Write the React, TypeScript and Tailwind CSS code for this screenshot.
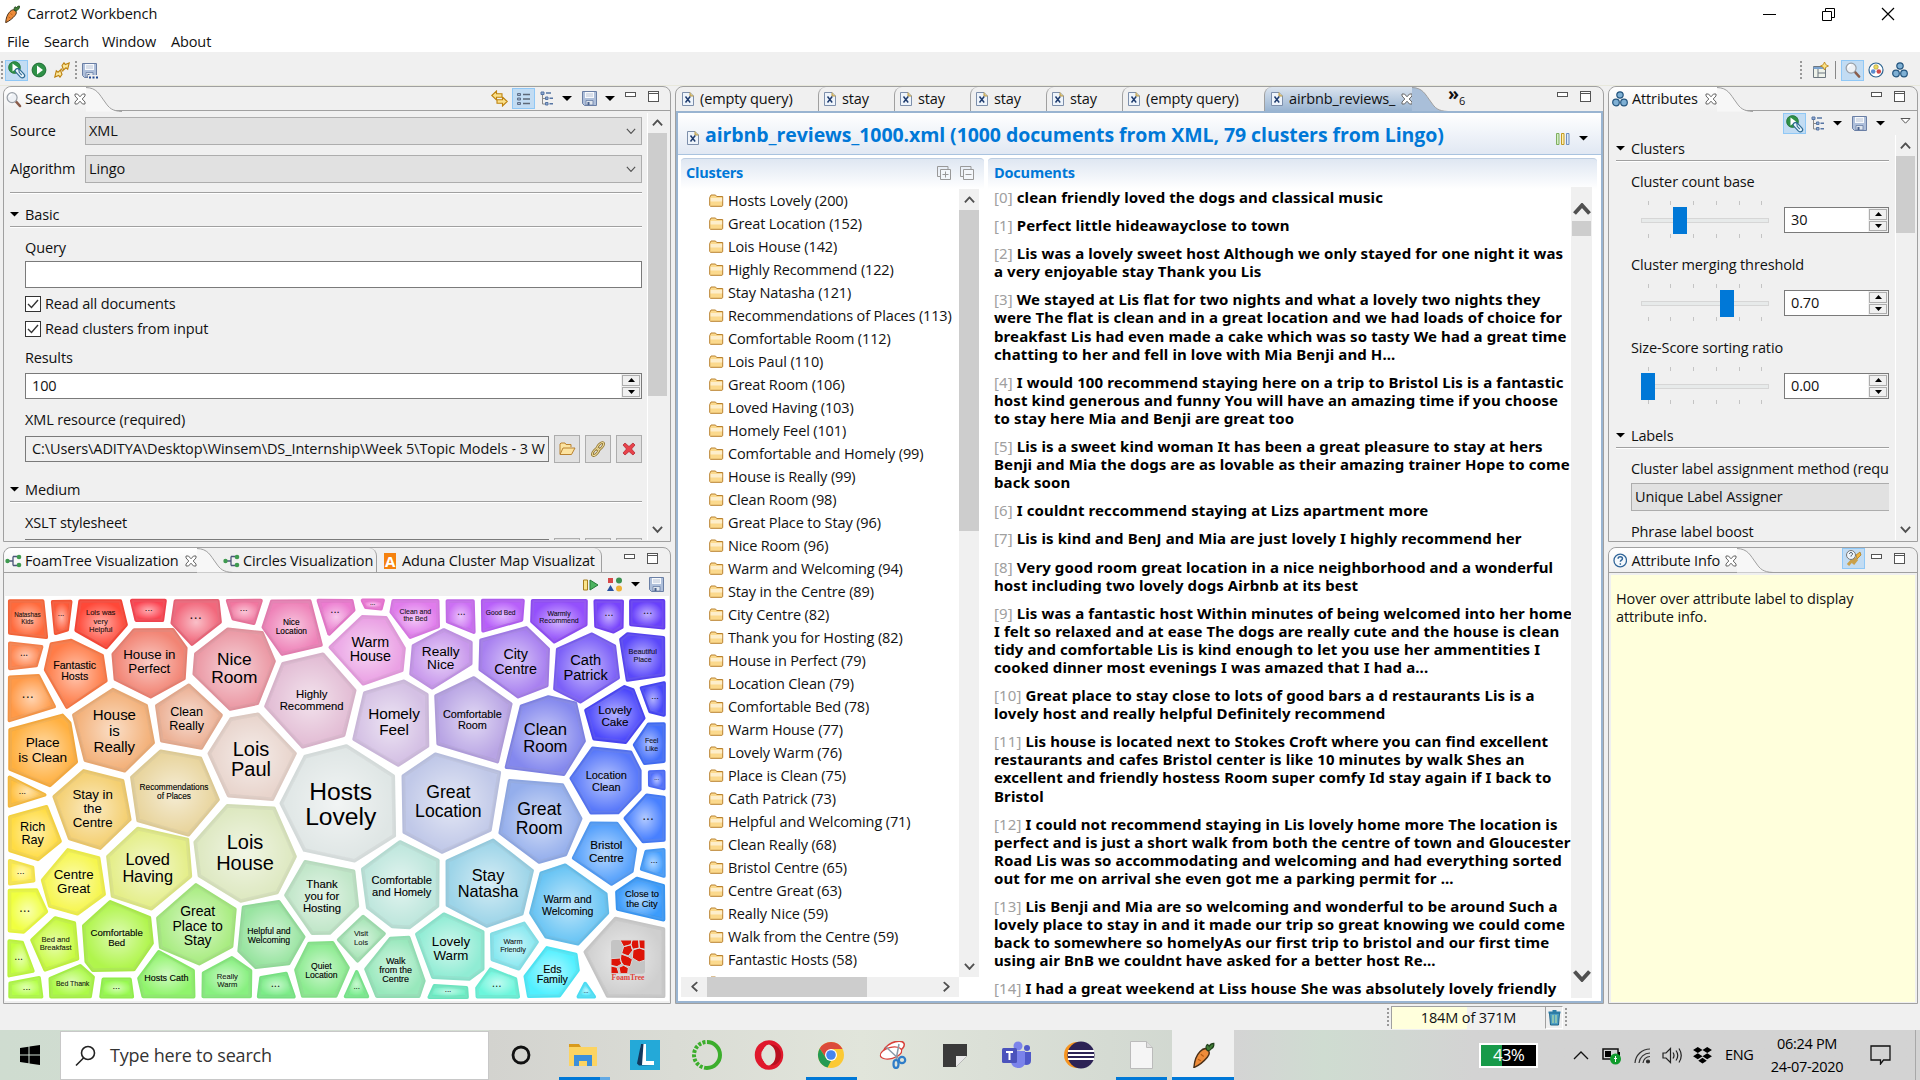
import React from "react";

type Kids = { children?: React.ReactNode };

/* ---------- small icons ---------- */
const Tri = ({ s = 10 }: { s?: number }) => (
  <svg width={s} height={s / 2} viewBox="0 0 10 5" className="shrink-0"><path d="M0 0h10L5 5z" fill="#000" /></svg>
);
const CloseX = () => (
  <svg width="12" height="12" viewBox="0 0 12 12" className="shrink-0">
    <path d="M1 1h2.500L6 3.800 8.500 1H11v2L8.200 6 11 9v2H8.500L6 8.200 3.500 11H1V9l2.800-3L1 3z" fill="#fff" stroke="#666" strokeWidth="1" />
  </svg>
);
const MinMax = ({ gap = "gap-[12px]" }: { gap?: string }) => (
  <div className={"flex items-start " + gap}>
    <div className="mt-[1px] h-[5px] w-[11px] border border-[#555] bg-white" />
    <div className="h-[11px] w-[11px] border border-[#555] bg-white"><div className="mt-px h-px bg-[#555]" /></div>
  </div>
);
const Play = ({ s = 16 }: { s?: number }) => (
  <svg width={s} height={s} viewBox="0 0 16 16"><circle cx="8" cy="8" r="6.900" fill="#2f9147" stroke="#1e6e33" /><path d="M6 3.500v9L12 8z" fill="#fff" /></svg>
);
const PlayClip = () => (
  <svg width="18" height="18" viewBox="0 0 18 18">
    <circle cx="6.500" cy="6.500" r="5.900" fill="#2f9147" stroke="#1e6e33" strokeWidth=".8" /><path d="M4.500 2.500v8L10 6.500z" fill="#fff" />
    <path d="M7.500 8.500c1.500-1.800 3.500-.8 5 .8l3.500 3.800c2 2.500-1 5-3.500 3l-4-4.200C7 10.500 6.800 9.500 7.500 8.500z" fill="#eaf4fb" stroke="#2f6b93" strokeWidth="1.200" />
    <path d="M10.800 7.500l.4 3.800 2.600 2.800" fill="none" stroke="#2f6b93" strokeWidth="1.100" />
  </svg>
);
const Swap = () => (
  <svg width="16" height="16" viewBox="0 0 16 16" fill="#fbe79b" stroke="#bd8210" strokeWidth="1.100">
    <path d="M8 3.500L10 .8l1.300 1.700L15.200 1l-1.500 6.200L12 5.800 9.500 8zM8 12.500l-2 2.700-1.300-1.700L.8 15l1.500-6.200L4 10.200 6.500 8z" />
    <path d="M7 6.500l2 3" />
  </svg>
);
const LinkArrows = () => (
  <svg width="17" height="17" viewBox="0 0 17 17" fill="#fbe08a" stroke="#bd8210" strokeWidth="1.100">
    <path d="M.8 5.500L5.500 1v2.800H11v3.400H5.500V10zM16.200 11.500L11.500 7v2.800H6v3.400h5.500V16z" />
  </svg>
);
const Save = ({ dots = false }: { dots?: boolean }) => (
  <svg width="17" height="17" viewBox="0 0 17 17">
    <path d="M1.500 1.500h14v14h-12l-2-2z" fill="#aebfda" stroke="#6a7fa5" />
    <path d="M4 2h9v6H4z" fill="#f7f9fc" /><path d="M5 4h7M5 6h7" stroke="#b9c4d6" />
    <path d="M5 10.500h7V15H5z" fill="#dfe6ee" stroke="#6a7fa5" strokeWidth=".8" /><path d="M6.500 12h2v3h-2z" fill="#49618c" />
    {dots && <path d="M7 13h10v4H7z" fill="#f0f0f0" />}
    {dots && <path d="M8 15.500h2M11.500 15.500h2M15 15.500h2" stroke="#234a92" strokeWidth="2" />}
  </svg>
);
const ListIcon = () => (
  <svg width="14" height="14" viewBox="0 0 14 14" stroke="#5f7089"><path d="M.5 1.500h3v2h-3zM.5 6h3v2h-3zM.5 10.500h3v2h-3z" fill="#9fb2cf" /><path d="M6 2.500h7M6 7h7M6 11.500h7" stroke="#5d6877" strokeWidth="1.300" /></svg>
);
const TreeIcon = () => (
  <svg width="14" height="15" viewBox="0 0 14 15" fill="none" stroke="#5675a3"><path d="M2.500 3v10h3M2.500 7.500h3" stroke="#888" /><path d="M1 1h3v2.500H1zM5.500 6h2.500v2.500H5.500zM5.500 11.500h2.500V14H5.500z" fill="#8fa9d1" /><path d="M6 2h5M9.500 7.300H13M9.500 12.700H13" strokeWidth="1.400" /></svg>
);
const Magnifier = ({ s = 17 }: { s?: number }) => (
  <svg width={s} height={s} viewBox="0 0 17 17"><path d="M10.500 10.500l4.500 5" stroke="#8a5d4b" strokeWidth="2.600" strokeLinecap="round" /><circle cx="6.500" cy="6.500" r="5.300" fill="#eef1f5" stroke="#9aa0a8" strokeWidth="1.300" /><path d="M3.500 6a3.200 3.200 0 013-3" stroke="#fff" strokeWidth="1.500" fill="none" /></svg>
);
const Balls = () => (
  <svg width="16" height="16" viewBox="0 0 16 16" fill="#7fb0d4" stroke="#24557e" strokeWidth="1.200"><circle cx="8" cy="4" r="3.200" /><circle cx="4" cy="11.500" r="3.300" /><circle cx="12" cy="11.500" r="3.300" /></svg>
);
const RingIcon = () => (
  <svg width="16" height="16" viewBox="0 0 16 16"><circle cx="8" cy="8" r="7" fill="#fff" stroke="#2c6390" strokeWidth="1.200" /><circle cx="8" cy="5" r="2.300" fill="#ecd95e" stroke="#a8953a" strokeWidth=".6" /><circle cx="5.200" cy="9.500" r="2.300" fill="#5c8fd0" /><circle cx="10.800" cy="9.500" r="2.300" fill="#d04a4a" /></svg>
);
const Perspective = () => (
  <svg width="17" height="17" viewBox="0 0 17 17"><path d="M1.500 4.500h12v11h-12z" fill="#eef2ea" stroke="#6d7780" /><path d="M1.500 5h12v2h-12z" fill="#7ba3d0" /><path d="M6 7v8M6 11h7.500" stroke="#6d7780" /><path d="M12.500 0l1.300 2.700L16.500 4l-2.700 1.300L12.500 8l-1.300-2.700L8.500 4l2.700-1.300z" fill="#fbe384" stroke="#bd8210" strokeWidth=".8" /></svg>
);
const Carrot = ({ s = 18 }: { s?: number }) => (
  <svg width={s} height={s} viewBox="0 0 18 18"><path d="M12.500 5.500c1.300 1.500 1 3.200-.5 5-2.500 3-5.500 5.500-9.300 7.200C3 13.500 4 9.500 7 6.500c1.700-1.700 4-2.500 5.500-1z" fill="#ee8c3a" stroke="#4a3018" strokeWidth="1" /><path d="M7.500 8.500l2 1.500M5.500 12l2 1" stroke="#b85d14" strokeWidth=".8" /><path d="M12 6c-1.200-1.500-1.200-3 0-4.300.7.300 1 .6 1.300 1.300C14 1.500 15 1 16.500 1c.2 1.700-.3 2.800-1.500 3.500-.8 1.200-1.800 1.700-3 1.500z" fill="#3f7c35" stroke="#1f3f1a" strokeWidth=".8" /></svg>
);
const XFile = () => (
  <svg width="12" height="14" viewBox="0 0 12 14" className="shrink-0"><path d="M.5.5h7.500l3.500 3.500v9.500H.5z" fill="#eef4fb" stroke="#7d8fab" /><path d="M8 .5v3.500h3.500" fill="#e0c98a" stroke="#b89a4a" /><path d="M3.500 4.500l4.700 6M8.200 4.500l-4.700 6" stroke="#1f3c6e" strokeWidth="1.500" /></svg>
);
const Folder = () => (
  <svg width="15" height="13" viewBox="0 0 15 13" className="shrink-0">
    <path d="M.7 3.500L2 1h4.500l1.200 1.500h6v9.200L13 12.300H1.500L.7 11.500z" fill="#fbd98d" stroke="#b98230" /><path d="M1.500 4h11.700v3.500H1.500z" fill="#fff" opacity=".55" />
  </svg>
);
const Share = () => (
  <svg width="17" height="14" viewBox="0 0 17 14" className="shrink-0"><path d="M4 7h4M8 2.500v9M8 2.500h4M8 11.500h4" fill="none" stroke="#4a5578" strokeWidth="1.300" /><circle cx="2.500" cy="7" r="2.200" fill="#3f9a4f" /><circle cx="14" cy="3" r="2.300" fill="#3f9a4f" /><circle cx="14" cy="11" r="2.300" fill="#3f9a4f" /></svg>
);
const Chevron = ({ up = false, s = 9, w = 1.8 }: { up?: boolean; s?: number; w?: number }) => (
  <svg width={s} height={s * 0.67} viewBox="0 0 12 8" className={up ? "rotate-180" : ""}><path d="M1 1l5 5.500L11 1" fill="none" stroke="#505050" strokeWidth={w} /></svg>
);
const Grip = () => <div className="h-[18px] w-[2px] border-l-2 border-dotted border-[#999]" />;
const Hi = ({ children }: Kids) => (
  <div className="flex h-[21px] w-[23px] shrink-0 items-center justify-center border border-[#90c8f6] bg-[#c2dcf3]">{children}</div>
);

/* ---------- tabs ---------- */
const TabCurve = ({ fill = "#fff" }: { fill?: string }) => (
  <svg width="36" height="25" viewBox="0 0 36 25" className="shrink-0">
    <path d="M0 0C11 1 13 7 19 15c4 6 7 9 16 9.500H0z" fill={fill} /><path d="M0 .5C11 1 13 7 19 15c4 6 7 9 17 9.500" fill="none" stroke="#a0a0a0" />
  </svg>
);

/* ---------- form pieces ---------- */
const Combo = ({ text, cls }: { text: string; cls: string }) => (
  <div className={"flex h-[28px] items-center justify-between border border-[#adadad] bg-[#e1e1e1] pr-[5px] pl-[3px] " + cls}>
    <span>{text}</span><Chevron s={10} w={1.300} />
  </div>
);
const Spinner = ({ value, cls }: { value: string; cls: string }) => (
  <div className={"flex h-[26px] items-center border border-[#7a7a7a] bg-white pl-[6px] " + cls}>
    <span className="flex-1">{value}</span>
    <div className="flex h-full w-[20px] flex-col gap-px bg-[#f0f0f0] p-px">
      <div className="flex flex-1 items-center justify-center border border-[#adadad] bg-[#f0f0f0]"><svg width="7" height="4"><path d="M0 4h7L3.500 0z" /></svg></div>
      <div className="flex flex-1 items-center justify-center border border-[#adadad] bg-[#f0f0f0]"><svg width="7" height="4"><path d="M0 0h7L3.500 4z" /></svg></div>
    </div>
  </div>
);
const Check = ({ text }: { text: string }) => (
  <div className="flex h-[25px] items-center gap-[4px]">
    <div className="h-[16px] w-[16px] border border-[#333] bg-white"><svg width="14" height="14" viewBox="0 0 14 14"><path d="M2 7l3.500 3.500L12 3" fill="none" stroke="#333" strokeWidth="1.400" /></svg></div>
    <span>{text}</span>
  </div>
);
const SectionHead = ({ text, gap = "gap-[6px]" }: { text: string; gap?: string }) => (
  <div className={"flex h-[24px] items-center border-b border-[#a0a0a0] shadow-[0_1px_0_#fff] " + gap}><Tri s={9} /><span>{text}</span></div>
);
const Btn = ({ children }: Kids) => (
  <div className="flex h-[28px] w-[26px] items-center justify-center border border-[#adadad] bg-[#e1e1e1]">{children}</div>
);
const ResourceRow = ({ text }: { text: string }) => (
  <div className="flex h-[28px] w-[617px] items-center justify-between">
    <div className="flex h-[26px] w-[524px] items-center overflow-hidden border border-[#7a7a7a] bg-[#f0f0f0] px-[2px]">
      <div className="overflow-hidden pl-[4px] tracking-[-0.080px] whitespace-nowrap">{text}</div>
    </div>
    <Btn><svg width="17" height="14" viewBox="0 0 17 14" fill="#fce3a0" stroke="#b98230"><path d="M1 12V2l1-1h4l1 1.500h5V5" /><path d="M1 12.500L4 6h12l-3.500 6.500z" /></svg></Btn>
    <Btn><svg width="16" height="16" viewBox="0 0 16 16" fill="none"><g stroke="#8f7430" strokeWidth="2.600"><ellipse cx="10.300" cy="5.200" rx="2" ry="4.500" transform="rotate(40 10.300 5.200)" /><ellipse cx="5.700" cy="10.800" rx="2" ry="4.500" transform="rotate(40 5.700 10.800)" /></g><g stroke="#efdc9c" strokeWidth="1"><ellipse cx="10.300" cy="5.200" rx="2" ry="4.500" transform="rotate(40 10.300 5.200)" /><ellipse cx="5.700" cy="10.800" rx="2" ry="4.500" transform="rotate(40 5.700 10.800)" /></g></svg></Btn>
    <Btn><svg width="14" height="14" viewBox="0 0 14 14"><path d="M1 3l2-2 4 3.500L11 1l2 2-3.500 4L13 11l-2 2-4-3.500L3 13l-2-2 3.500-4z" fill="#e8424a" stroke="#b01c28" strokeWidth=".7" /></svg></Btn>
  </div>
);

/* ---------- search panel ---------- */
const SearchPanel = () => (
  <section className="h-[456px] w-[668px] rounded-t-[8px] border border-[#a0a0a0] bg-[#f0f0f0]">
    <div className="flex h-[24px] items-start border-b border-[#a0a0a0]">
      <div className="flex h-[24px] w-[82px] items-center gap-[3px] rounded-tl-[8px] bg-linear-to-b from-white to-[#f0f0f0] pl-[2px]"><Magnifier /><span className="w-[49px]">Search</span><CloseX /></div>
      <TabCurve fill="#f7f7f7" />
      <div className="mt-px ml-auto flex h-[21px] items-center pr-[11px]">
        <LinkArrows /><div className="ml-[4px]"><Hi><ListIcon /></Hi></div>
        <div className="ml-[5px]"><TreeIcon /></div><div className="ml-[8px]"><Tri /></div>
        <div className="ml-[9px]"><Save /></div><div className="ml-[7px]"><Tri /></div>
        <div className="mb-[4px] ml-[10px]"><MinMax /></div>
      </div>
    </div>
    <div className="flex h-[429px] overflow-hidden pt-[2px]">
      <div className="w-[643px] pt-[4px] pl-[6px]">
        <div className="flex h-[28px] items-center"><span className="w-[75px]">Source</span><Combo text="XML" cls="w-[557px]" /></div>
        <div className="mt-[10px] flex h-[28px] items-center"><span className="w-[75px]">Algorithm</span><Combo text="Lingo" cls="w-[557px]" /></div>
        <div className="mt-[9px] h-px w-[632px] bg-[#a0a0a0] shadow-[0_1px_0_#fff]" />
        <div className="mt-[10px] w-[632px]"><SectionHead text="Basic" /></div>
        <div className="pl-[15px]">
          <div className="flex h-[34px] items-end pb-[4px]">Query</div>
          <div className="h-[27px] w-[617px] border border-[#7a7a7a] bg-white" />
          <div className="mt-[3px]"><Check text="Read all documents" /><Check text="Read clusters from input" /></div>
          <div className="flex h-[32px] items-end pb-[6px]">Results</div>
          <div className="h-[26px]"><Spinner value="100" cls="w-[617px]" /></div>
          <div className="flex h-[36px] items-end pb-[6px]">XML resource (required)</div>
          <ResourceRow text="C:\Users\ADITYA\Desktop\Winsem\DS_Internship\Week 5\Topic Models - 3 W" />
        </div>
        <div className="mt-[15px] w-[632px]"><SectionHead text="Medium" /></div>
        <div className="pl-[15px]">
          <div className="flex h-[36px] items-center pt-[6px]">XSLT stylesheet</div>
          <ResourceRow text="" />
        </div>
      </div>
      <div className="flex h-[427px] w-[20px] flex-col items-center border-l border-white bg-[#f0f0f0]">
        <div className="flex h-[20px] items-center"><Chevron up s={11} w={2} /></div>
        <div className="h-[263px] w-full bg-[#cdcdcd]" />
        <div className="mt-auto flex h-[20px] items-center"><Chevron s={11} w={2} /></div>
      </div>
    </div>
  </section>
);

/* ---------- foam tree (coordinates are thirds of a pixel, grouped in quadrants) ---------- */
type Cell = [string, string, string?, number?, number?, number?, number?];
const TL: Cell[] = [
  ["25,179 132,179 143,296 25,283", "#ff6a3c", "Natashas|Kids", 19, 82, 225, 20],
  ["155,180 215,180 204,275 165,285", "#ff5a38", "...", 24, 183, 219],
  ["236,179 365,179 384,255 320,328 223,273", "#ff4838", "Lois was|very|Helpful", 23, 302, 217, 26],
  ["390,179 500,179 492,244 404,244", "#fc4552", "...", 28, 446, 203],
  ["522,179 658,179 666,247 575,318 511,250", "#f2687c", "...", 46, 587, 222],
  ["678,179 788,179 765,254 695,240", "#f277a0", "...", 28, 731, 204],
  ["812,179 933,179 968,318 845,348 784,262", "#ee82b8", "Nice|Location", 25, 874, 246, 26],
  ["150,308 213,296 312,345 323,425 200,507 131,390", "#ff7c48", "Fantastic|Hosts", 32, 224, 376, 32],
  ["400,265 522,265 563,322 557,418 452,476 341,420 334,342", "#f28474", "House in|Perfect", 40, 448, 343, 43],
  ["683,262 790,274 828,363 775,495 690,513 577,403 582,340", "#eb98a4", "Nice|Room", 52, 703, 358, 54],
  ["25,306 130,318 113,380 25,389", "#ff8650", "...", 30, 72, 338],
  ["25,408 118,402 168,502 25,546", "#ff9a48", "...", 44, 83, 460],
  ["338,443 443,493 465,610 375,698 252,665 216,523", "#f3b078", "House|is|Really", 45, 343, 525, 47],
  ["567,430 669,525 607,629 481,606 465,495", "#ecb094", "Clean|Really", 38, 560, 515, 42],
  ["190,521 213,545 234,668 150,742 25,690 25,567", "#ffb040", "Place|is Clean", 41, 128, 607, 45],
  ["690,532 775,517 891,640 820,783 683,772 622,640", "#e8d4cc", "Lois|Paul", 60, 753, 626, 60],
  ["845,367 970,337 1070,450 1035,590 907,626 792,500", "#e2bcd4", "Highly|Recommend", 34, 935, 463, 35],
];
const TR: Cell[] = [
  ["-40,179 70,179 77,210 -5,287", "#ec7cd0", "...", 34, 15, 208],
  ["92,179 165,179 158,209 102,204", "#f078d8", "...", 20, 128, 187],
  ["185,179 328,179 330,262 240,297 178,215", "#e07cec", "Clean and|the Bed", 21, 256, 215, 21],
  ["348,179 433,179 435,281 348,248", "#cc70f4", "...", 30, 394, 214],
  ["453,179 584,179 580,242 455,276", "#b860fa", "Good Bed", 20, 512, 218],
  ["603,179 773,179 773,255 672,311 600,245", "#9450fc", "Warmly|Recommend", 21, 687, 220, 22],
  ["792,179 880,179 880,265 852,281 793,262", "#7844fc", "...", 32, 837, 216],
  ["898,179 1005,179 1005,267 898,257", "#6840fc", "...", 34, 953, 211],
  ["95,225 170,228 228,325 220,395 98,437 -5,322", "#eaa0e4", "Warm|House", 43, 121, 306, 42],
  ["342,264 428,305 428,372 305,449 238,405 245,315", "#c898ec", "Really|Nice", 41, 332, 333, 41],
  ["590,258 660,325 655,440 565,476 445,390 448,298", "#a880f0", "City|Centre", 43, 557, 342, 45],
  ["787,277 858,315 870,415 750,491 670,450 678,325", "#7c60f8", "Cath|Patrick", 44, 767, 360, 45],
  ["890,277 1005,290 1005,408 890,425 868,295", "#5a48fa", "Beautiful|Place", 22, 938, 333, 24],
  ["930,440 1005,424 1005,530 958,520", "#4848fc", "...", 28, 975, 468],
  ["885,435 912,445 947,535 888,612 788,600 762,510", "#4c48fc", "Lovely|Cake", 35, 855, 510, 36],
  ["955,547 1005,547 1005,668 942,675 908,615", "#4470fc", "Feel|Like", 21, 965, 602, 24],
  ["655,465 740,485 768,605 703,708 525,685 570,495", "#8488ee", "Clean|Room", 50, 646, 568, 51],
  ["432,408 548,490 505,670 320,615 313,465", "#b8a4e4", "Comfortable|Room", 32.7, 427, 523, 32],
  ["223,418 295,460 297,622 205,681 67,600 100,455", "#d4c0e4", "Homely|Feel", 46, 192, 521, 48],
];
const BL: Cell[] = [
  ["250,-3 372,28 395,150 302,240 205,210 157,78", "#f4cf70", "Stay in|the|Centre", 40, 278, 73, 42],
  ["480,-62 605,-40 660,90 567,200 410,155 390,20", "#e8d49c", "Recommendations|of Places", 25, 522, 52, 26],
  ["912,-45 1040,-78 1185,15 1188,200 1065,278 910,245 838,100", "#dfe6e5", "Hosts|Lovely", 74, 1022, 65, 75],
  ["25,17 140,75 25,112", "#ffc040", "...", 26, 67, 62],
  ["25,137 142,105 186,215 115,274 25,245", "#ffdc44", "Rich|Ray", 38, 98, 170, 40],
  ["25,268 103,290 106,335 25,345", "#ffee50", "...", 28, 62, 302],
  ["203,234 300,260 318,375 233,437 145,412 122,330", "#f6f64c", "Centre|Great", 40, 221, 314, 41],
  ["412,170 567,205 577,320 455,422 333,382 318,258", "#e4ee88", "Loved|Having", 49, 443, 268, 52],
  ["680,102 825,110 891,260 835,372 722,399 593,320 580,215", "#dde8c0", "Lois|House", 60, 735, 216, 62],
  ["25,357 112,355 145,425 70,492 25,487", "#f0ff40", "...", 42, 74, 410],
  ["165,438 227,455 237,570 133,605 90,510", "#c8fb40", "Bed and|Breakfast", 23, 167, 508, 24],
  ["330,390 453,440 462,520 405,603 275,605 254,578 246,465", "#b0f54c", "Comfortable|Bed", 29, 350, 488, 30],
  ["588,339 710,415 700,532 598,587 477,535 468,443", "#a8ec80", "Great|Place to|Stay", 42, 593, 424, 43],
  ["727,407 838,390 917,500 870,585 765,597 712,545", "#98e4a0", "Helpful and|Welcoming", 26, 807, 483, 27],
  ["25,508 68,512 103,607 25,622", "#c4ff40", "...", 32, 56, 558],
  ["25,638 122,620 130,683 25,683", "#b4ff48", "...", 28, 80, 649],
  ["145,625 243,582 285,620 275,683 148,683", "#acfa48", "Bed Thank", 21, 218, 641],
  ["305,625 395,625 402,683 298,683", "#98fa50", "...", 28, 349, 647],
  ["475,540 585,600 586,683 425,683 411,625", "#90f46c", "Hosts Cath", 27, 499, 623],
  ["697,558 757,600 755,683 605,683 605,608", "#88f080", "Really|Warm", 23, 682, 619, 24],
  ["778,620 862,606 887,683 771,683", "#7cec88", "...", 34, 826, 640],
  ["925,515 1000,513 1050,593 1010,683 905,683 882,600", "#8ceb90", "Quiet|Location", 26, 964, 588, 26],
  ["913,270 1065,300 1078,410 990,495 935,495 852,375", "#c0e6c8", "Thank|you for|Hosting", 34, 966, 343, 36],
];
const BR: Cell[] = [
  ["100,434 168,490 82,578 20,510", "#a4e4b4", "Visit|Lois", 23, 93, 490, 27],
  ["80,600 117,683 42,683", "#7cee90", "...", 24, 80, 648],
  ["210,210 328,267 328,410 240,478 185,475 108,415 93,295", "#bde6dc", "Comfortable|and Homely", 33.500, 215, 331, 36],
  ["180,500 238,497 287,635 270,683 137,683 102,597", "#98e8bc", "Walk|from the|Centre", 27, 197, 572, 28],
  ["340,427 463,482 463,600 420,632 305,626 255,490", "#90ecd4", "Lovely|Warm", 40, 363, 515, 41],
  ["308,645 415,652 417,683 292,683", "#70f0c8", "...", 24, 354, 658],
  ["480,592 562,625 570,683 437,683 435,655", "#6cf6dc", "...", 36, 500, 637],
  ["480,490 585,455 627,515 568,602 482,572", "#88e8f0", "Warm|Friendly", 22, 549, 515, 24],
  ["490,205 612,300 580,435 470,474 347,408 347,270", "#9cd4e8", "Stay|Natasha", 49, 474, 316, 48],
  ["315,-53 513,5 485,183 335,252 218,190 215,15", "#c0c8e8", "Great|Location", 53, 355, 66, 57],
  ["535,28 700,40 758,145 710,258 627,282 505,190", "#94aeec", "Great|Room", 53, 628, 117, 57],
  ["705,280 833,370 838,430 745,527 645,505 597,430 630,305", "#68c4f4", "Warm and|Welcoming", 31.500, 713, 389, 34],
  ["650,528 742,550 750,600 690,683 592,683 580,620", "#50f0ff", "Eds|Family", 32, 667, 597, 32],
  ["765,635 798,683 740,683", "#50e8ff", "...", 18, 768, 662],
  ["780,155 862,155 922,235 910,308 845,348 725,265", "#54a0fc", "Bristol|Centre", 35, 829, 224, 39],
  ["855,365 920,320 1005,345 1005,453 858,420", "#3c9cfc", "Close to|the City", 28, 936, 371, 30],
  ["855,440 1005,473 1005,683 830,683 760,545", "#cfcfcf"],
  ["945,240 1005,235 1005,323 930,300", "#48a0ff", "...", 26, 972, 270],
  ["950,70 1005,78 1005,215 938,220 880,145", "#4880ff", "...", 42, 954, 136],
  ["955,2 1005,0 1005,60 955,50", "#5070ff", "...", 18, 980, 25],
  ["785,-70 905,-58 935,0 935,60 865,133 780,133 718,25", "#5878fa", "Location|Clean", 33, 829, 16, 35],
];

const inset = (pts: string, d: number) => {
  const p = pts.split(" ").map((s) => s.split(",").map(Number));
  const cx = p.reduce((a, q) => a + q[0], 0) / p.length;
  const cy = p.reduce((a, q) => a + q[1], 0) / p.length;
  return p.map(([x, y]) => {
    const l = Math.hypot(x - cx, y - cy);
    const k = (l - d) / l;
    return (cx + (x - cx) * k).toFixed(1) + "," + (cy + (y - cy) * k).toFixed(1);
  }).join(" ");
};

const Foam = ({ cells, x, y }: { cells: Cell[]; x: number; y: number }) => (
  <g transform={`translate(${x} ${y})`}>
    {cells.map(([pts, color, label, size = 20, tx = 0, ty = 0, lead = 0], i) => (
      <g key={i}>
        <polygon points={inset(pts, 6)} fill={color} stroke={color} strokeWidth="11" strokeLinejoin="round" />
        <polygon points={inset(pts, 6)} fill="none" stroke="#000" strokeOpacity=".05" strokeWidth="11" strokeLinejoin="round" />
        <polygon points={inset(pts, 9)} fill="url(#glow)" stroke="#fff" strokeOpacity=".08" strokeWidth="6" strokeLinejoin="round" />
        {label && label.split("|").map((t, k) => (
          <text key={k} x={tx} y={ty + k * lead + size * 0.35} fontSize={size} textAnchor="middle" fill="#000" fillOpacity={size < 24 || t === "..." ? 0.85 : 1} stroke="#000" strokeWidth={size < 36 ? 0.6 : 0} strokeOpacity=".6" fontFamily="Liberation Sans, sans-serif">{t}</text>
        ))}
      </g>
    ))}
  </g>
);

const FoamPanel = () => (
  <section className="mt-[5px] h-[457px] w-[668px] rounded-t-[8px] border border-[#a0a0a0] bg-[#f0f0f0]">
    <div className="flex h-[25px] items-start border-b border-[#a0a0a0]">
      <div className="flex h-[24px] w-[193px] items-center rounded-tl-[8px] bg-linear-to-b from-white to-[#f0f0f0] pt-px pl-[1px]"><Share /><span className="ml-[3px] w-[163px] whitespace-nowrap">FoamTree Visualization</span><CloseX /></div>
      <TabCurve fill="#f7f7f7" />
      <div className="-ml-[10px] flex h-[24px] w-[154px] items-center rounded-tr-[8px] border-r border-[#a0a0a0] pt-px"><Share /><span className="ml-[3px] whitespace-nowrap">Circles Visualization</span></div>
      <div className="flex h-[24px] w-[225px] items-center rounded-tr-[8px] border-r border-[#a0a0a0] pt-px pl-[7px]">
        <div className="flex h-[16px] w-[12px] items-center justify-center bg-[#f5820f] text-[15px] font-bold text-white">A</div>
        <span className="ml-[6px] whitespace-nowrap">Aduna Cluster Map Visualizat</span>
      </div>
      <div className="mt-[5px] ml-auto pr-[12px]"><MinMax /></div>
    </div>
    <div className="flex h-[23px] items-center justify-end pr-[5px]">
      <svg width="16" height="12" viewBox="0 0 16 12"><path d="M.5 1h4v10h-4z" fill="#fbe58c" stroke="#a57e1e" /><path d="M7 1v10l8-5z" fill="#4db35f" stroke="#247a38" /></svg>
      <svg width="16" height="15" viewBox="0 0 16 15" className="ml-[8px]"><path d="M1 1h5v5H1z" fill="#d64848" /><circle cx="12" cy="3.500" r="3" fill="#3b9150" /><path d="M0 14h7L3.500 8z" fill="#28519e" /><circle cx="12" cy="11.500" r="3" fill="#eeb035" /></svg>
      <div className="ml-[8px]"><Tri s={9} /></div>
      <div className="ml-[8px]"><Save /></div>
    </div>
    <svg width="664" height="405" viewBox="15 1788 1992 1215" className="ml-px block bg-white">
      <defs>
        <radialGradient id="glow"><stop offset="0" stopColor="#fff" stopOpacity=".58" /><stop offset="1" stopColor="#fff" stopOpacity="0" /></radialGradient>
      </defs>
      <Foam cells={TL} x={0} y={1620} />
      <Foam cells={TR} x={990} y={1620} />
      <Foam cells={BL} x={0} y={2310} />
      <Foam cells={BR} x={990} y={2310} />
      <g transform="translate(1833 2820)">
        <rect width="102" height="101" rx="8" fill="#c4c4c4" />
        <g fill="#dd1407" stroke="#d8d8d8" strokeWidth="3">
          <path d="M27 0h36l-3 14-22 6zM63 0h20l2 24-22 4-3-14zM83 0h19v28l-17-4zM38 20l22-6 6 16-14 18-20-8zM66 30l19-6 17 6v30l-18 6-20-12zM30 42l22 8 12 8-6 22-20-4-10-14zM0 56l28-2 4 18-14 8-18-4zM0 78l18 4 6 19H0zM24 82l14-6 14 8-2 17H28z" />
        </g>
        <text x="51" y="120" fontSize="23" textAnchor="middle" fill="#e0443a" fontWeight="bold" fontFamily="Liberation Serif, serif">FoamTree</text>
      </g>
    </svg>
  </section>
);

/* ---------- editor ---------- */
const clusters = ["Hosts Lovely (200)", "Great Location (152)", "Lois House (142)", "Highly Recommend (122)", "Stay Natasha (121)", "Recommendations of Places (113)", "Comfortable Room (112)", "Lois Paul (110)", "Great Room (106)", "Loved Having (103)", "Homely Feel (101)", "Comfortable and Homely (99)", "House is Really (99)", "Clean Room (98)", "Great Place to Stay (96)", "Nice Room (96)", "Warm and Welcoming (94)", "Stay in the Centre (89)", "City Centre (82)", "Thank you for Hosting (82)", "House in Perfect (79)", "Location Clean (79)", "Comfortable Bed (78)", "Warm House (77)", "Lovely Warm (76)", "Place is Clean (75)", "Cath Patrick (73)", "Helpful and Welcoming (71)", "Clean Really (68)", "Bristol Centre (65)", "Centre Great (63)", "Really Nice (59)", "Walk from the Centre (59)", "Fantastic Hosts (58)"];

const docs: string[][] = [
  ["clean friendly loved the dogs and classical music"],
  ["Perfect little hideawayclose to town"],
  ["Lis was a lovely sweet host Although we only stayed for one night it was", "a very enjoyable stay Thank you Lis"],
  ["We stayed at Lis flat for two nights and what a lovely two nights they", "were The flat is clean and in a great location and we had loads of choice for", "breakfast Lis had even made a cake which was so tasty We had a great time", "chatting to her and fell in love with Mia Benji and H..."],
  ["I would 100 recommend staying here on a trip to Bristol Lis is a fantastic", "host kind generous and funny You will have an amazing time if you choose", "to stay here Mia and Benji are great too"],
  ["Lis is a sweet kind woman It has been a great pleasure to stay at hers", "Benji and Mia the dogs are as lovable as their amazing trainer Hope to come", "back soon"],
  ["I couldnt reccommend staying at Lizs apartment more"],
  ["Lis is kind and BenJ and Mia are just lovely I highly recommend her"],
  ["Very good room great location in a nice neighborhood and a wonderful", "host including two lovely dogs Airbnb at its best"],
  ["Lis was a fantastic host Within minutes of being welcomed into her home", "I felt so relaxed and at ease The dogs are really cute and the house is clean", "tidy and comfortable Lis is kind enough to let you use her ammentities I", "cooked dinner most evenings I was amazed that I had a..."],
  ["Great place to stay close to lots of good bars a d restaurants Lis is a", "lovely host and really helpful Definitely recommend"],
  ["Lis house is located next to Stokes Croft where you can find excellent", "restaurants and cafes Bristol center is like 10 minutes by walk Shes an", "excellent and friendly hostess Room super comfy Id stay again if I back to", "Bristol"],
  ["I could not recommend staying in Lis lovely home more The location is", "perfect and is just a short walk from both the centre of town and Gloucester", "Road Lis was so accommodating and welcoming and had everything sorted", "out for me on arrival she even got me a parking permit for ..."],
  ["Lis Benji and Mia are so welcoming and wonderful to be around Such a", "lovely place to stay in and it made our trip so great knowing we could come", "back to somewhere so homelyAs our first trip to bristol and our first time", "using air BnB we couldnt have asked for a better host Re..."],
  ["I had a great weekend at Liss house She was absolutely lovely friendly"],
];

const EditorTab = ({ text, cls }: { text: string; cls: string }) => (
  <div className={"flex h-[24px] shrink-0 items-center gap-[6px] rounded-tl-[8px] border-l border-[#a0a0a0] pl-[5px] " + cls}><XFile /><span className="whitespace-nowrap">{text}</span></div>
);

const ExpandIcon = ({ plus = false }: { plus?: boolean }) => (
  <svg width="14" height="14" viewBox="0 0 14 14" fill="none" stroke="#999"><path d="M3 10.500H.5V.5h10.500V3" /><path d="M3.500 3.500h10v10h-10zM5.500 8.500h6" fill="#f4f7fb" />{plus && <path d="M8.500 5.500v6" />}</svg>
);

const Editor = () => (
  <section className="flex h-[918px] w-[929px] flex-col rounded-t-[8px] border border-[#a0a0a0] bg-[#f0f0f0]">
    <div className="flex h-[24px] shrink-0 items-start">
      <EditorTab text="(empty query)" cls="w-[142px] border-l-0 pl-[6px]" />
      <EditorTab text="stay" cls="w-[76px]" />
      <EditorTab text="stay" cls="w-[76px]" />
      <EditorTab text="stay" cls="w-[76px]" />
      <EditorTab text="stay" cls="w-[76px]" />
      <EditorTab text="(empty query)" cls="w-[142px]" />
      <div className="flex h-[24px] w-[148px] items-center gap-[6px] rounded-tl-[8px] border-l border-[#a0a0a0] bg-linear-to-b from-[#dbe4ef] to-[#99b4d1] pl-[6px]"><XFile /><span className="w-[109px]">airbnb_reviews_</span><CloseX /></div>
      <TabCurve fill="#a9bfd9" />
      <div className="-ml-[3px] flex pl-[3px] leading-[12px]"><span className="text-[18px] font-bold">»</span><span className="mt-[8px] text-[11px]">6</span></div>
      <div className="mt-[4px] ml-auto pr-[12px]"><MinMax /></div>
    </div>
    <div className="flex flex-1 flex-col border-[2px] border-[#99b4d1] bg-white">
      <div className="flex h-[41px] shrink-0 items-center bg-linear-to-b from-white to-[#e1e8f3] pl-[9px]">
        <div className="mt-[8px]"><XFile /></div>
        <h1 className="mt-[3px] ml-[6px] w-[851px] text-[19.500px] font-bold tracking-[-0.080px] whitespace-nowrap text-[#0078d7]">airbnb_reviews_1000.xml (1000 documents from XML, 79 clusters from Lingo)</h1>
        <svg width="14" height="12" viewBox="0 0 14 12" className="mt-[10px]"><path d="M.5.5h2.500v11H.5z" fill="#d5efc5" stroke="#7fae5f" /><path d="M5.500.5h2.500v11H5.500z" fill="#fff0b0" stroke="#c39a22" /><path d="M10.500.5H13v11h-2.500z" fill="#dce8f8" stroke="#6f8fc0" /></svg>
        <div className="mt-[10px] ml-[9px]"><Tri s={9} /></div>
      </div>
      <div className="h-px shrink-0 bg-[#a9c3df]" />
      <div className="flex flex-1 gap-[4px] pt-[3px] pr-[4px] pl-[3px]">
        <div className="flex h-[842px] w-[303px] flex-col rounded-t-[4px] border-t border-[#bccde2] bg-linear-to-b from-[#dfe7f2] to-white bg-[length:100%_30px] bg-no-repeat">
          <div className="flex h-[30px] shrink-0 items-center pb-[3px] pl-[5px]"><h2 className="flex-1 text-[14.500px] font-bold tracking-[-0.250px] text-[#0078d7]">Clusters</h2><ExpandIcon plus /><div className="mr-[10px] ml-[9px]"><ExpandIcon /></div></div>
          <div className="flex h-[788px] overflow-hidden">
            <ul className="w-[278px] overflow-hidden pl-[28px]">
              {clusters.map((c) => (<li key={c} className="flex h-[23px] items-center gap-[4px] whitespace-nowrap"><Folder />{c}</li>))}
              <li className="flex h-[23px] items-center"><Folder /></li>
            </ul>
            <div className="flex w-[20px] flex-col items-center bg-[#f0f0f0]">
              <div className="flex h-[21px] items-center"><Chevron up s={11} w={2} /></div>
              <div className="h-[321px] w-full bg-[#cdcdcd]" />
              <div className="mt-auto flex h-[21px] items-center"><Chevron s={11} w={2} /></div>
            </div>
          </div>
          <div className="flex h-[20px] w-[278px] items-center bg-[#f0f0f0]">
            <div className="ml-[8px] flex w-[18px] justify-start"><div className="rotate-90"><Chevron s={11} w={2} /></div></div>
            <div className="h-full w-[160px] bg-[#cdcdcd]" />
            <div className="ml-[74px] -rotate-90"><Chevron s={11} w={2} /></div>
          </div>
        </div>
        <div className="h-[842px] w-[609px] overflow-hidden rounded-t-[4px] border-t border-[#bccde2] bg-linear-to-b from-[#dfe7f2] to-white bg-[length:100%_30px] bg-no-repeat">
          <h2 className="flex h-[28px] items-center pb-px pl-[6px] text-[14.500px] font-bold tracking-[-0.200px] text-[#0078d7]">Documents</h2>
          <div className="flex">
            <div className="h-[811px] w-[583px] overflow-hidden pt-px pl-[6px] font-['Noto_Sans'] text-[15px] leading-[18.100px] font-bold tracking-[0.100px] whitespace-nowrap text-black">
              {docs.map((d, i) => (
                <div key={i} className="mb-[10px]">
                  {d.map((l, k) => (<div key={k}>{k === 0 && <span className="font-normal text-[#a0a0a0]">[{i}] </span>}{l}</div>))}
                </div>
              ))}
            </div>
            <div className="flex h-[811px] w-[21px] flex-col items-center bg-[#f0f0f0]">
              <div className="flex h-[34px] items-end pb-[6px]"><Chevron up s={18} w={2.600} /></div>
              <div className="h-[15px] w-[19px] bg-[#cdcdcd]" />
              <div className="mt-auto flex h-[40px] items-center pb-[4px]"><Chevron s={18} w={2.600} /></div>
            </div>
          </div>
        </div>
      </div>
    </div>
  </section>
);

/* ---------- attributes ---------- */
const Ticks = () => (<div className="flex h-[5px] w-[115px] justify-between">{[0, 1, 2, 3, 4, 5].map((i) => (<div key={i} className="h-[4px] w-px bg-[#c4c4c4]" />))}</div>);
const SliderBlock = ({ label, value, off }: { label: string; value: string; off: string }) => (
  <div className="h-[83px]">
    <div className="flex h-[20px] items-center whitespace-nowrap">{label}</div>
    <div className="flex h-[56px] items-center">
      <div className="ml-[10px] flex h-[38px] w-[128px] flex-col items-center justify-between">
        <Ticks />
        <div className="flex h-[27px] w-full items-center">
          <div className="flex h-[5px] w-full items-center border border-[#d6d6d6] bg-[#e7eaea]"><div className={"h-[27px] w-[14px] shrink-0 bg-[#0078d7] " + off} /></div>
        </div>
        <Ticks />
      </div>
      <Spinner value={value} cls="ml-[15px] w-[105px]" />
    </div>
  </div>
);

const Attributes = () => (
  <section className="h-[456px] w-[310px] rounded-t-[8px] border border-[#a0a0a0] bg-[#f0f0f0]">
    <div className="flex h-[24px] items-start border-b border-[#a0a0a0]">
      <div className="flex h-[24px] w-[108px] items-center gap-[4px] rounded-tl-[8px] bg-linear-to-b from-white to-[#f0f0f0] pl-[3px]"><Balls /><span className="w-[69px]">Attributes</span><CloseX /></div>
      <TabCurve fill="#f7f7f7" />
      <div className="mt-[4px] ml-auto pr-[12px]"><MinMax /></div>
    </div>
    <div className="flex h-[24px] items-start justify-end pt-[2px] pr-[6px]">
      <Hi><PlayClip /></Hi>
      <div className="flex h-[21px] items-center"><div className="ml-[5px]"><TreeIcon /></div><div className="ml-[8px]"><Tri s={9} /></div><div className="ml-[9px]"><Save /></div><div className="ml-[8px]"><Tri s={9} /></div>
        <svg width="11" height="6" viewBox="0 0 11 6" className="mb-[5px] ml-[15px]"><path d="M1 .5h9L5.500 5.200z" fill="#fff" stroke="#555" /></svg></div>
    </div>
    <div className="flex h-[405px]">
      <div className="w-[286px] overflow-hidden pl-[7px]">
        <div className="w-[273px]"><div className="pt-[2px]"><SectionHead text="Clusters" /></div></div>
        <div className="w-[273px] overflow-hidden pt-[11px] pl-[15px]">
          <SliderBlock label="Cluster count base" value="30" off="ml-[31px]" />
          <SliderBlock label="Cluster merging threshold" value="0.70" off="ml-[78px]" />
          <SliderBlock label="Size-Score sorting ratio" value="0.00" off="-ml-[1px]" />
        </div>
        <div className="w-[273px] pt-[3px]"><SectionHead text="Labels" /></div>
        <div className="w-[273px] overflow-hidden pt-[11px] pl-[15px] whitespace-nowrap">
          <div className="flex h-[20px] items-center">Cluster label assignment method (requi</div>
          <Combo text="Unique Label Assigner" cls="mt-[4px] w-[330px]" />
          <div className="mt-[11px] flex h-[20px] items-center">Phrase label boost</div>
        </div>
      </div>
      <div className="flex h-[405px] w-[20px] flex-col items-center border-l border-white">
        <div className="flex h-[21px] items-center"><Chevron up s={11} w={2} /></div>
        <div className="h-[77px] w-full bg-[#cdcdcd]" />
        <div className="mt-auto flex h-[20px] items-center"><Chevron s={11} w={2} /></div>
      </div>
    </div>
  </section>
);

const AttributeInfo = () => (
  <section className="mt-[5px] h-[457px] w-[310px] rounded-t-[8px] border border-[#a0a0a0] bg-[#f0f0f0]">
    <div className="flex h-[25px] items-start border-b border-[#a0a0a0]">
      <div className="flex h-[24px] w-[128px] items-center rounded-tl-[8px] bg-linear-to-b from-white to-[#f0f0f0] pt-px pl-[4px]">
        <svg width="15" height="15" viewBox="0 0 15 15"><circle cx="7.500" cy="7.500" r="6.500" fill="#f5f9fd" stroke="#2f6498" strokeWidth="1.300" /><path d="M5.300 5.800c0-3 4.500-2.800 4.500-.2 0 1.500-2.200 1.600-2.200 3.300M7.600 10.300v1.500" fill="none" stroke="#2f6498" strokeWidth="1.500" /></svg>
        <span className="ml-[4px] w-[97px] whitespace-nowrap">Attribute Info</span><CloseX />
      </div>
      <TabCurve fill="#f7f7f7" />
      <div className="ml-auto flex items-start pr-[12px]">
        <Hi><svg width="17" height="17" viewBox="0 0 17 17"><path d="M3 15l7-8M8 14l4-5" stroke="#c9a04a" strokeWidth="3" /><circle cx="6" cy="5" r="4.500" fill="#eef5fb" stroke="#777" /><path d="M4.500 4c0-2 3-2 3 0 0 1-1.500 1-1.500 2.500" fill="none" stroke="#345" /><path d="M11 5l4-3 1 3-4 4z" fill="#f0b33c" stroke="#a87514" strokeWidth=".7" /></svg></Hi>
        <div className="mt-[5px] ml-[6px]"><MinMax /></div>
      </div>
    </div>
    <div className="mt-[2px] ml-[2px] h-[427px] w-[304px] bg-[#ffffdc] pt-[15px] pl-[5px] leading-[18px]">Hover over attribute label to display<br />attribute info.</div>
  </section>
);

/* ---------- taskbar ---------- */
const TaskIcon = ({ children, cls = "" }: Kids & { cls?: string }) => (
  <div className={"flex h-full w-[62px] items-center justify-center " + cls}>{children}</div>
);
const Underline = ({ cls = "" }: { cls?: string }) => <div className={"absolute bottom-0 h-[3px] bg-[#0078d7] " + cls} />;

const Taskbar = () => (
  <footer className="flex h-[50px] items-stretch bg-linear-to-r from-[#cfdcd0] via-[#dadfd6] to-[#d2d2d2] text-black">
    <div className="flex w-[60px] items-center justify-center"><svg width="20" height="20" viewBox="0 0 20 20"><path d="M0 3l8.500-1.200v7.700H0zM9.500 1.600L20 0v9.500H9.500zM0 10.500h8.500v7.700L0 17zM9.500 10.500H20V20L9.500 18.400z" /></svg></div>
    <div className="mt-px flex h-[49px] w-[429px] items-center border border-[#c8c8c8] bg-white pl-[13px]">
      <svg width="24" height="22" viewBox="0 0 24 22" fill="none" stroke="#222" strokeWidth="1.600"><circle cx="14" cy="8" r="6.500" /><path d="M9.500 13L2 20.500" /></svg>
      <span className="ml-[12px] pb-[2px] text-[18px] tracking-[-0.200px] text-[#333]">Type here to search</span>
    </div>
    <div className="flex bg-linear-to-r from-[#d3d3cf] via-[#e1e5db] to-[#cfd6cf] pl-[1px]">
      <TaskIcon><svg width="20" height="20"><circle cx="10" cy="10" r="8" fill="none" stroke="#111" strokeWidth="2.800" /></svg></TaskIcon>
      <TaskIcon cls="relative"><svg width="28" height="24" viewBox="0 0 28 24"><path d="M0 1h10l2 3H0z" fill="#d99a1c" /><path d="M0 4h28v19H0z" fill="#fcd462" /><path d="M5 12h18v11h-5v-5h-8v5H5z" fill="#3d8fdb" /></svg><Underline cls="left-[7px] w-[41px]" /><div className="absolute bottom-0 left-[48px] h-[3px] w-[10px] bg-[#62a9e4]" /></TaskIcon>
      <TaskIcon><div className="flex h-[30px] w-[30px] items-center justify-center bg-[#24a9d8]"><svg width="18" height="22" viewBox="0 0 18 22"><path d="M5 0h5v17h8v4H3z" fill="#fff" /><path d="M5 0L1 19.500l2 2 15-.5H6L7.500 0z" fill="#12395e" /></svg></div></TaskIcon>
      <TaskIcon><svg width="32" height="32" viewBox="0 0 32 32" fill="none" stroke="#3cae2c"><path d="M16 3a13 13 0 010 26" strokeWidth="4" /><path d="M16 29A13 13 0 0116 3" strokeWidth="4" strokeDasharray="3 1.500" /></svg></TaskIcon>
      <TaskIcon><svg width="30" height="30" viewBox="0 0 30 30"><ellipse cx="15" cy="15" rx="11" ry="11.500" fill="none" stroke="#e0182c" strokeWidth="6.500" /><ellipse cx="15" cy="15" rx="6.500" ry="10.500" fill="#e0e4da" /><path d="M15 4.500c5 1.500 6.500 6 6.500 10.500s-1.500 9-6.500 10.500c8 1 12-5 12-10.500S23 3.500 15 4.500z" fill="#b8101f" /></svg></TaskIcon>
      <TaskIcon cls="relative"><svg width="28" height="28" viewBox="0 0 28 28"><circle cx="14" cy="14" r="13" fill="#fbc934" /><path d="M2.700 7.500A13 13 0 0125.500 8H14L9 17z" fill="#dc4a3c" /><path d="M2.700 7.500L9 17l5 3-3.500 6.600A13 13 0 012.700 7.500z" fill="#249a53" /><circle cx="14" cy="14" r="6" fill="#fff" /><circle cx="14" cy="14" r="4.800" fill="#4584f0" /></svg><Underline cls="left-[6px] w-[51px]" /></TaskIcon>
      <TaskIcon><svg width="28" height="28" viewBox="0 0 28 28"><ellipse cx="15" cy="7" rx="11" ry="5.500" fill="#fff" stroke="#d8413a" strokeWidth="1.500" transform="rotate(-25 15 7)" /><ellipse cx="12" cy="12" rx="11" ry="5.500" fill="#fff" stroke="#d8413a" strokeWidth="1.200" transform="rotate(-15 12 12)" /><path d="M7 6l13 12M20 3l-3 16" stroke="#8a9aa8" strokeWidth="1.500" /><circle cx="23" cy="19" r="3.200" fill="none" stroke="#2f7dc8" strokeWidth="2.200" /><ellipse cx="17" cy="23" rx="2.500" ry="4" fill="none" stroke="#2f7dc8" strokeWidth="2.200" /></svg></TaskIcon>
      <TaskIcon><svg width="24" height="23" viewBox="0 0 24 23"><path d="M0 0h24v12L13 23H0z" fill="#3a3a3a" /><path d="M13 23V12h11z" fill="#e8e8e8" /></svg></TaskIcon>
      <TaskIcon><svg width="30" height="28" viewBox="0 0 30 28"><circle cx="16" cy="5" r="4.500" fill="#7b83eb" /><circle cx="25" cy="7" r="3" fill="#5059c9" /><path d="M20 11h9v9c0 4-5 5-8 3z" fill="#5059c9" /><path d="M9 10h14v11c0 8-13 8-14 0z" fill="#7b83eb" /><rect y="7" width="15" height="15" rx="1.500" fill="#4b53bc" /><path d="M4 11h7M7.500 11v8" stroke="#fff" strokeWidth="2" /></svg></TaskIcon>
      <TaskIcon><svg width="31" height="28" viewBox="0 0 31 28"><circle cx="13" cy="14" r="13" fill="#f7941e" /><circle cx="17" cy="14" r="13.500" fill="#2c2255" /><path d="M4 10h26M4 14h26M4 18h26" stroke="#fff" strokeWidth="2" /></svg></TaskIcon>
      <TaskIcon cls="relative"><svg width="23" height="28" viewBox="0 0 23 28"><path d="M.5.500h16l6 6v21H.5z" fill="#f5f5f5" stroke="#bbb" /><path d="M16.500.5v6h6" fill="#ddd" stroke="#bbb" /></svg><Underline cls="left-[6px] w-[51px]" /></TaskIcon>
      <TaskIcon cls="relative bg-[#f0f0f0]"><Carrot s={26} /><Underline cls="left-0 w-full" /></TaskIcon>
    </div>
    <div className="flex flex-1 items-center bg-linear-to-r from-[#d4d4d4] via-[#cfdcd1] via-13% to-[#d3d3d3] to-35%">
      <div className="ml-[245px] flex h-[25px] w-[59px] shrink-0 items-center border-2 border-white bg-black"><div className="flex h-full w-full items-center justify-center bg-linear-to-r from-[#179a49] from-38% to-black to-38% text-[17px] tracking-[-0.800px] text-white">43%</div></div>
      <svg width="16" height="9" viewBox="0 0 16 9" className="ml-[35px]" fill="none" stroke="#111" strokeWidth="1.300"><path d="M1 8l7-7 7 7" /></svg>
      <svg width="20" height="19" viewBox="0 0 20 19" className="ml-[13px]"><path d="M1 3h15v10H1z" fill="none" stroke="#111" strokeWidth="1.500" /><path d="M3 5h6v6H3z" /><path d="M16 6h2v4h-2z" /><circle cx="13.500" cy="13" r="5.500" fill="#109b2c" /><path d="M13.500 10v6M12 12.500h3" stroke="#fff" /></svg>
      <svg width="17" height="17" viewBox="0 0 17 17" className="ml-[12px]" fill="none" stroke="#333" strokeWidth="1.200"><path d="M1 16A15 15 0 0116 2M5 16A11 11 0 0116 6M9 16a7 7 0 017-6.500" /><circle cx="14" cy="14.500" r="1.500" fill="#222" /></svg>
      <svg width="20" height="17" viewBox="0 0 20 17" className="ml-[11px]" fill="none" stroke="#222" strokeWidth="1.200"><path d="M1 6h3l4.500-4.500v14L4 11H1zM11 5.500q2 3 0 6M14 3.500q3.500 5 0 10M17 1.500q4.500 7 0 14" /></svg>
      <svg width="19" height="17" viewBox="0 0 20 18" className="ml-[11px]"><path d="M5 0l5 3.200-5 3.200L0 3.200zM15 0l5 3.200-5 3.200-5-3.200zM5 6.500l5 3.200-5 3.200-5-3.200zM15 6.500l5 3.200-5 3.200-5-3.200zM10 11.500l4.500 3L10 17.500l-4.500-3z" /></svg>
      <span className="ml-[13px] w-[36px] text-[14.500px] tracking-[-0.300px]">ENG</span>
      <div className="ml-[4px] w-[84px] text-center text-[14.500px] leading-[23px] tracking-[-0.300px] whitespace-nowrap">06:24 PM<br />24-07-2020</div>
      <svg width="21" height="20" viewBox="0 0 21 20" className="ml-[21px]" fill="none" stroke="#111" strokeWidth="1.300"><path d="M1 1h19v14h-6.500L10.500 19v-4H1z" /></svg>
      <div className="ml-[24px] h-full w-px bg-[#a8a8a8]" />
    </div>
  </footer>
);

export default function App() {
  return (
    <div className="flex h-[1080px] w-[1920px] flex-col overflow-hidden bg-[#f0f0f0] font-['Open_Sans',sans-serif] text-[14.500px] leading-[18px] tracking-[-0.130px] text-[#111]">
      <header className="flex h-[28px] items-center bg-white pl-[3px]">
        <Carrot s={18} /><span className="ml-[6px] flex-1">Carrot2 Workbench</span>
        <div className="flex items-center gap-[46px] pr-[25px]">
          <div className="h-px w-[13px] bg-black" />
          <svg width="13" height="13" viewBox="0 0 13 13" fill="none" stroke="#000"><path d="M.5 3.500h9v9h-9zM3.500 3V.5h9v9H10" /></svg>
          <svg width="14" height="14" viewBox="0 0 14 14" stroke="#000" strokeWidth="1.200"><path d="M1 1l12 12M13 1L1 13" /></svg>
        </div>
      </header>
      <nav className="flex h-[24px] items-center bg-white pt-[3px] pl-[7px]"><span className="w-[37px]">File</span><span className="w-[58px]">Search</span><span className="w-[69px]">Window</span><span>About</span></nav>
      <div className="flex h-[34px] items-center border-b border-[#e8e8dc] pt-[3px] pl-[1px]">
        <Grip /><div className="ml-[2px]"><Hi><PlayClip /></Hi></div><div className="ml-[3px]"><Play /></div><div className="ml-[7px]"><Swap /></div>
        <div className="ml-[5px]"><Grip /></div><div className="ml-[4px]"><Save dots /></div>
        <div className="ml-auto flex items-center pr-[12px]">
          <Grip /><div className="ml-[10px]"><Perspective /></div><div className="mr-[5px] ml-[6px] h-[18px] w-px bg-[#888]" /><Hi><Magnifier s={16} /></Hi><div className="ml-[4px]"><RingIcon /></div><div className="ml-[8px]"><Balls /></div>
        </div>
      </div>
      <main className="flex h-[918px] pl-[3px]">
        <div className="flex flex-col"><SearchPanel /><FoamPanel /></div>
        <div className="ml-[4px]"><Editor /></div>
        <div className="ml-[4px] flex flex-col"><Attributes /><AttributeInfo /></div>
      </main>
      <div className="flex h-[26px] items-center pl-[1387px]">
        <Grip />
        <div className="ml-[2px] flex h-[23px] w-[154px] items-center justify-center border-t border-l border-[#a0a0a0] bg-linear-to-r from-[#ffffdc] from-49% to-[#f0f0f0] to-49%">184M of 371M</div>
        <div className="flex h-[23px] w-[18px] items-center justify-center border border-[#a0a0a0] border-r-white border-b-white"><svg width="13" height="17" viewBox="0 0 13 17"><path d="M1.500 4h10l-1 12h-8z" fill="#4e9fc4" stroke="#1d6488" /><path d="M.5 2.500h12v2H.5zM4.500 1h4v1.500h-4z" fill="#2b7ca6" /><path d="M5 6v8M8 6v8" stroke="#c7e8a0" /></svg></div>
        <div className="ml-[2px]"><Grip /></div>
      </div>
      <Taskbar />
    </div>
  );
}
